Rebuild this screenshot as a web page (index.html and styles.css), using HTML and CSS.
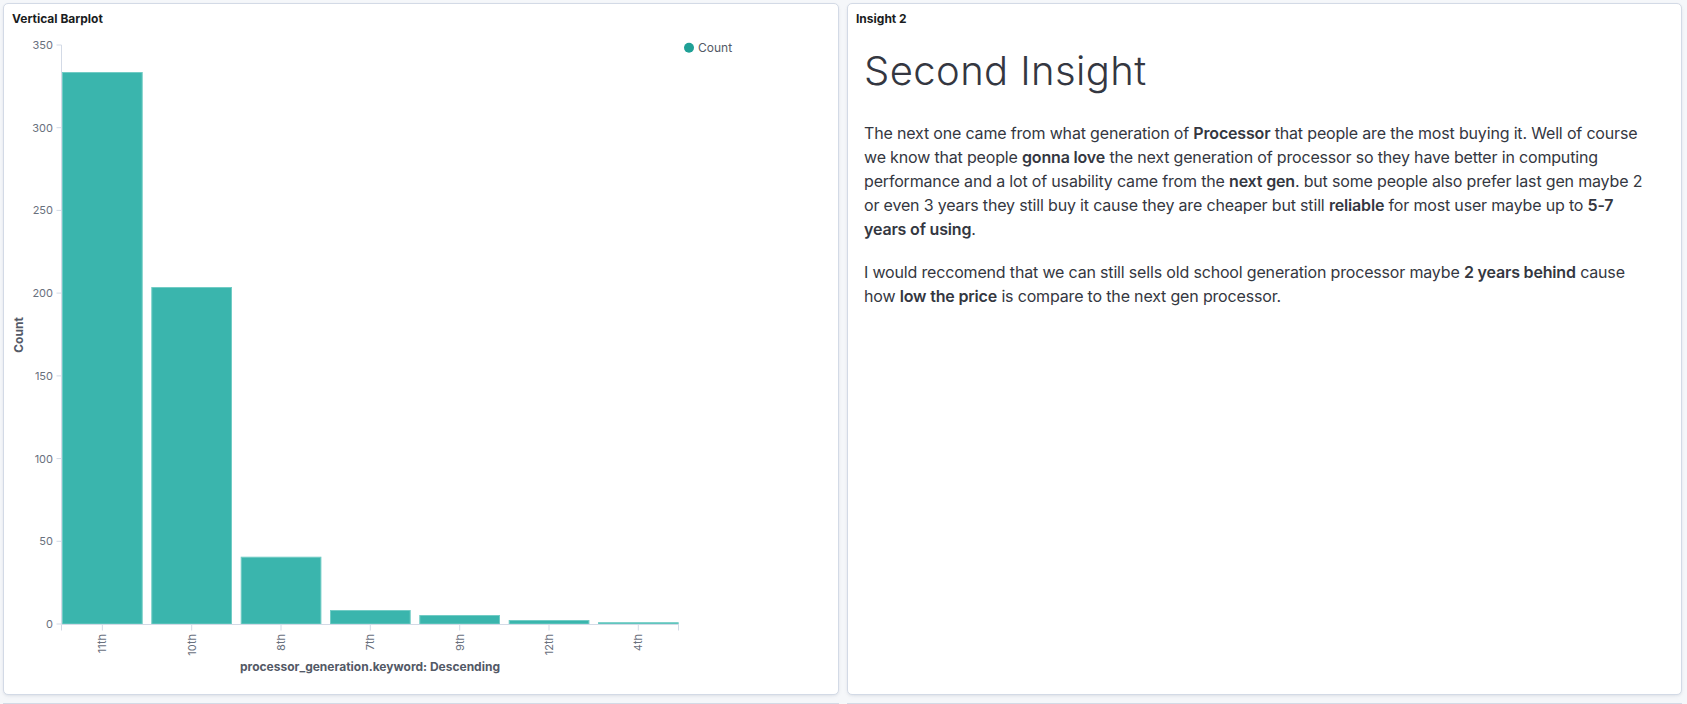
FILE: index.html
```html
<!DOCTYPE html>
<html lang="en">
<head>
<meta charset="utf-8">
<title>Dashboard</title>
<link rel="stylesheet" href="styles.css">
</head>
<body>
<div class="grid">
  <section class="panel">
    <h2 class="panel-title">Vertical Barplot</h2>
    <svg class="chart" viewBox="0 0 818 659" width="818" height="659">
      <g class="legend">
        <circle cx="677" cy="20.7" r="5" class="legend-dot"/>
        <text x="686" y="20.7" class="legend-text">Count</text>
      </g>
      <g class="y-axis">
        <line x1="49.5" y1="18" x2="49.5" y2="597" class="axis-line"/>
        <line x1="44.5" y1="18" x2="49.5" y2="18" class="axis-line"/>
        <line x1="44.5" y1="100.7" x2="49.5" y2="100.7" class="axis-line"/>
        <line x1="44.5" y1="183.4" x2="49.5" y2="183.4" class="axis-line"/>
        <line x1="44.5" y1="266.1" x2="49.5" y2="266.1" class="axis-line"/>
        <line x1="44.5" y1="348.9" x2="49.5" y2="348.9" class="axis-line"/>
        <line x1="44.5" y1="431.6" x2="49.5" y2="431.6" class="axis-line"/>
        <line x1="44.5" y1="514.3" x2="49.5" y2="514.3" class="axis-line"/>
        <line x1="44.5" y1="597" x2="49.5" y2="597" class="axis-line"/>
        <text x="41" y="18" class="tick-y">350</text>
        <text x="41" y="100.7" class="tick-y">300</text>
        <text x="41" y="183.4" class="tick-y">250</text>
        <text x="41" y="266.1" class="tick-y">200</text>
        <text x="41" y="348.9" class="tick-y">150</text>
        <text x="41" y="431.6" class="tick-y">100</text>
        <text x="41" y="514.3" class="tick-y">50</text>
        <text x="41" y="597" class="tick-y">0</text>
        <text transform="translate(6 308) rotate(-90)" class="axis-title">Count</text>
      </g>
      <g class="bars">
        <rect x="50.5" y="45.5" width="79.7" height="551.5" class="bar"/>
        <rect x="139.8" y="260.5" width="79.7" height="336.5" class="bar"/>
        <rect x="229.2" y="530.2" width="79.7" height="66.8" class="bar"/>
        <rect x="318.5" y="583.5" width="79.7" height="13.5" class="bar"/>
        <rect x="407.8" y="588.5" width="79.7" height="8.5" class="bar"/>
        <rect x="497.2" y="593.5" width="79.7" height="3.5" class="bar"/>
        <rect x="586.5" y="595.7" width="79.7" height="1.3" class="bar"/>
      </g>
      <g class="x-axis">
        <line x1="49.5" y1="597.5" x2="666.5" y2="597.5" class="axis-line"/>
        <line x1="49.5" y1="597.5" x2="49.5" y2="603.5" class="axis-line"/>
        <line x1="90.35" y1="597.5" x2="90.35" y2="603.5" class="axis-line"/>
        <line x1="179.7" y1="597.5" x2="179.7" y2="603.5" class="axis-line"/>
        <line x1="269" y1="597.5" x2="269" y2="603.5" class="axis-line"/>
        <line x1="358.3" y1="597.5" x2="358.3" y2="603.5" class="axis-line"/>
        <line x1="447.7" y1="597.5" x2="447.7" y2="603.5" class="axis-line"/>
        <line x1="537" y1="597.5" x2="537" y2="603.5" class="axis-line"/>
        <line x1="626.3" y1="597.5" x2="626.3" y2="603.5" class="axis-line"/>
        <line x1="666.5" y1="597.5" x2="666.5" y2="603.5" class="axis-line"/>
        <text transform="translate(90.35 607) rotate(-90)" class="tick-x">11th</text>
        <text transform="translate(179.7 607) rotate(-90)" class="tick-x">10th</text>
        <text transform="translate(269 607) rotate(-90)" class="tick-x">8th</text>
        <text transform="translate(358.3 607) rotate(-90)" class="tick-x">7th</text>
        <text transform="translate(447.7 607) rotate(-90)" class="tick-x">9th</text>
        <text transform="translate(537 607) rotate(-90)" class="tick-x">12th</text>
        <text transform="translate(626.3 607) rotate(-90)" class="tick-x">4th</text>
        <text x="358" y="644" class="axis-title-x">processor_generation.keyword: Descending</text>
      </g>
    </svg>
  </section>
  <section class="panel">
    <h2 class="panel-title">Insight 2</h2>
    <div class="markdown">
      <h1>Second Insight</h1>
      <p>The next one came from what generation of <strong>Processor</strong> that people are the most buying it. Well of course we know that people <strong>gonna love</strong> the next generation of processor so they have better in computing performance and a lot of usability came from the <strong>next gen</strong>. but some people also prefer last gen maybe 2 or even 3 years they still buy it cause they are cheaper but still <strong>reliable</strong> for most user maybe up to <strong>5-7 years of using</strong>.</p>
      <p>I would reccomend that we can still sells old school generation processor maybe <strong>2 years behind</strong> cause how <strong>low the price</strong> is compare to the next gen processor.</p>
    </div>
  </section>
  <section class="panel panel-next"></section>
  <section class="panel panel-next"></section>
</div>
</body>
</html>
```
FILE: styles.css
```css
html, body {
  margin: 0;
  padding: 0;
  height: 100%;
  overflow: hidden;
}

body {
  background: #f5f7fa;
  font-family: Inter, "Noto Sans", "Liberation Sans", sans-serif;
  color: #343741;
}

.grid {
  display: grid;
  grid-template-columns: 836px 835px;
  grid-template-rows: 692px 1px;
  column-gap: 8px;
  row-gap: 8px;
  padding: 3px 5px 0 3px;
}

.panel {
  background: #ffffff;
  border: 1px solid #d3dae6;
  border-radius: 5px;
  box-shadow: 0 1px 3px -1px rgba(40, 50, 80, 0.12), 0 2px 6px -2px rgba(40, 50, 80, 0.08);
  padding: 7px 8px 8px;
  display: flex;
  flex-direction: column;
  box-sizing: border-box;
  overflow: hidden;
}

.panel-next {
  border-bottom: none;
  padding: 0;
  box-shadow: none;
}

.panel-title {
  margin: 0;
  font-size: 12px;
  line-height: 16px;
  font-weight: 700;
  color: #1a1c21;
}

.chart {
  display: block;
  font-family: Inter, "Noto Sans", "Liberation Sans", sans-serif;
}

.axis-line {
  stroke: #d3dae6;
  stroke-width: 1;
}

.tick-y {
  font-size: 11px;
  fill: #69707d;
  text-anchor: end;
  dominant-baseline: central;
}

.tick-x {
  font-size: 11px;
  fill: #69707d;
  text-anchor: end;
  dominant-baseline: central;
}

.axis-title {
  font-size: 12px;
  font-weight: 700;
  fill: #535966;
  text-anchor: middle;
  dominant-baseline: central;
}

.axis-title-x {
  font-size: 12px;
  font-weight: 700;
  fill: #535966;
  text-anchor: middle;
}

.bar {
  fill: #3ab5ad;
  stroke: #72ccc5;
  stroke-width: 1;
}

.legend-dot {
  fill: #1fa096;
}

.legend-text {
  font-size: 12px;
  fill: #535966;
  dominant-baseline: central;
}

.markdown {
  padding: 20px 16px 0 8px;
}

.markdown h1 {
  margin: 0 0 26px;
  font-size: 40px;
  line-height: 48px;
  font-weight: 300;
  color: #343741;
  letter-spacing: 0.4px;
}

.markdown p {
  margin: 0 0 19px;
  font-size: 16px;
  line-height: 24px;
  color: #343741;
  letter-spacing: -0.17px;
}

.markdown strong {
  font-weight: 600;
}
```
